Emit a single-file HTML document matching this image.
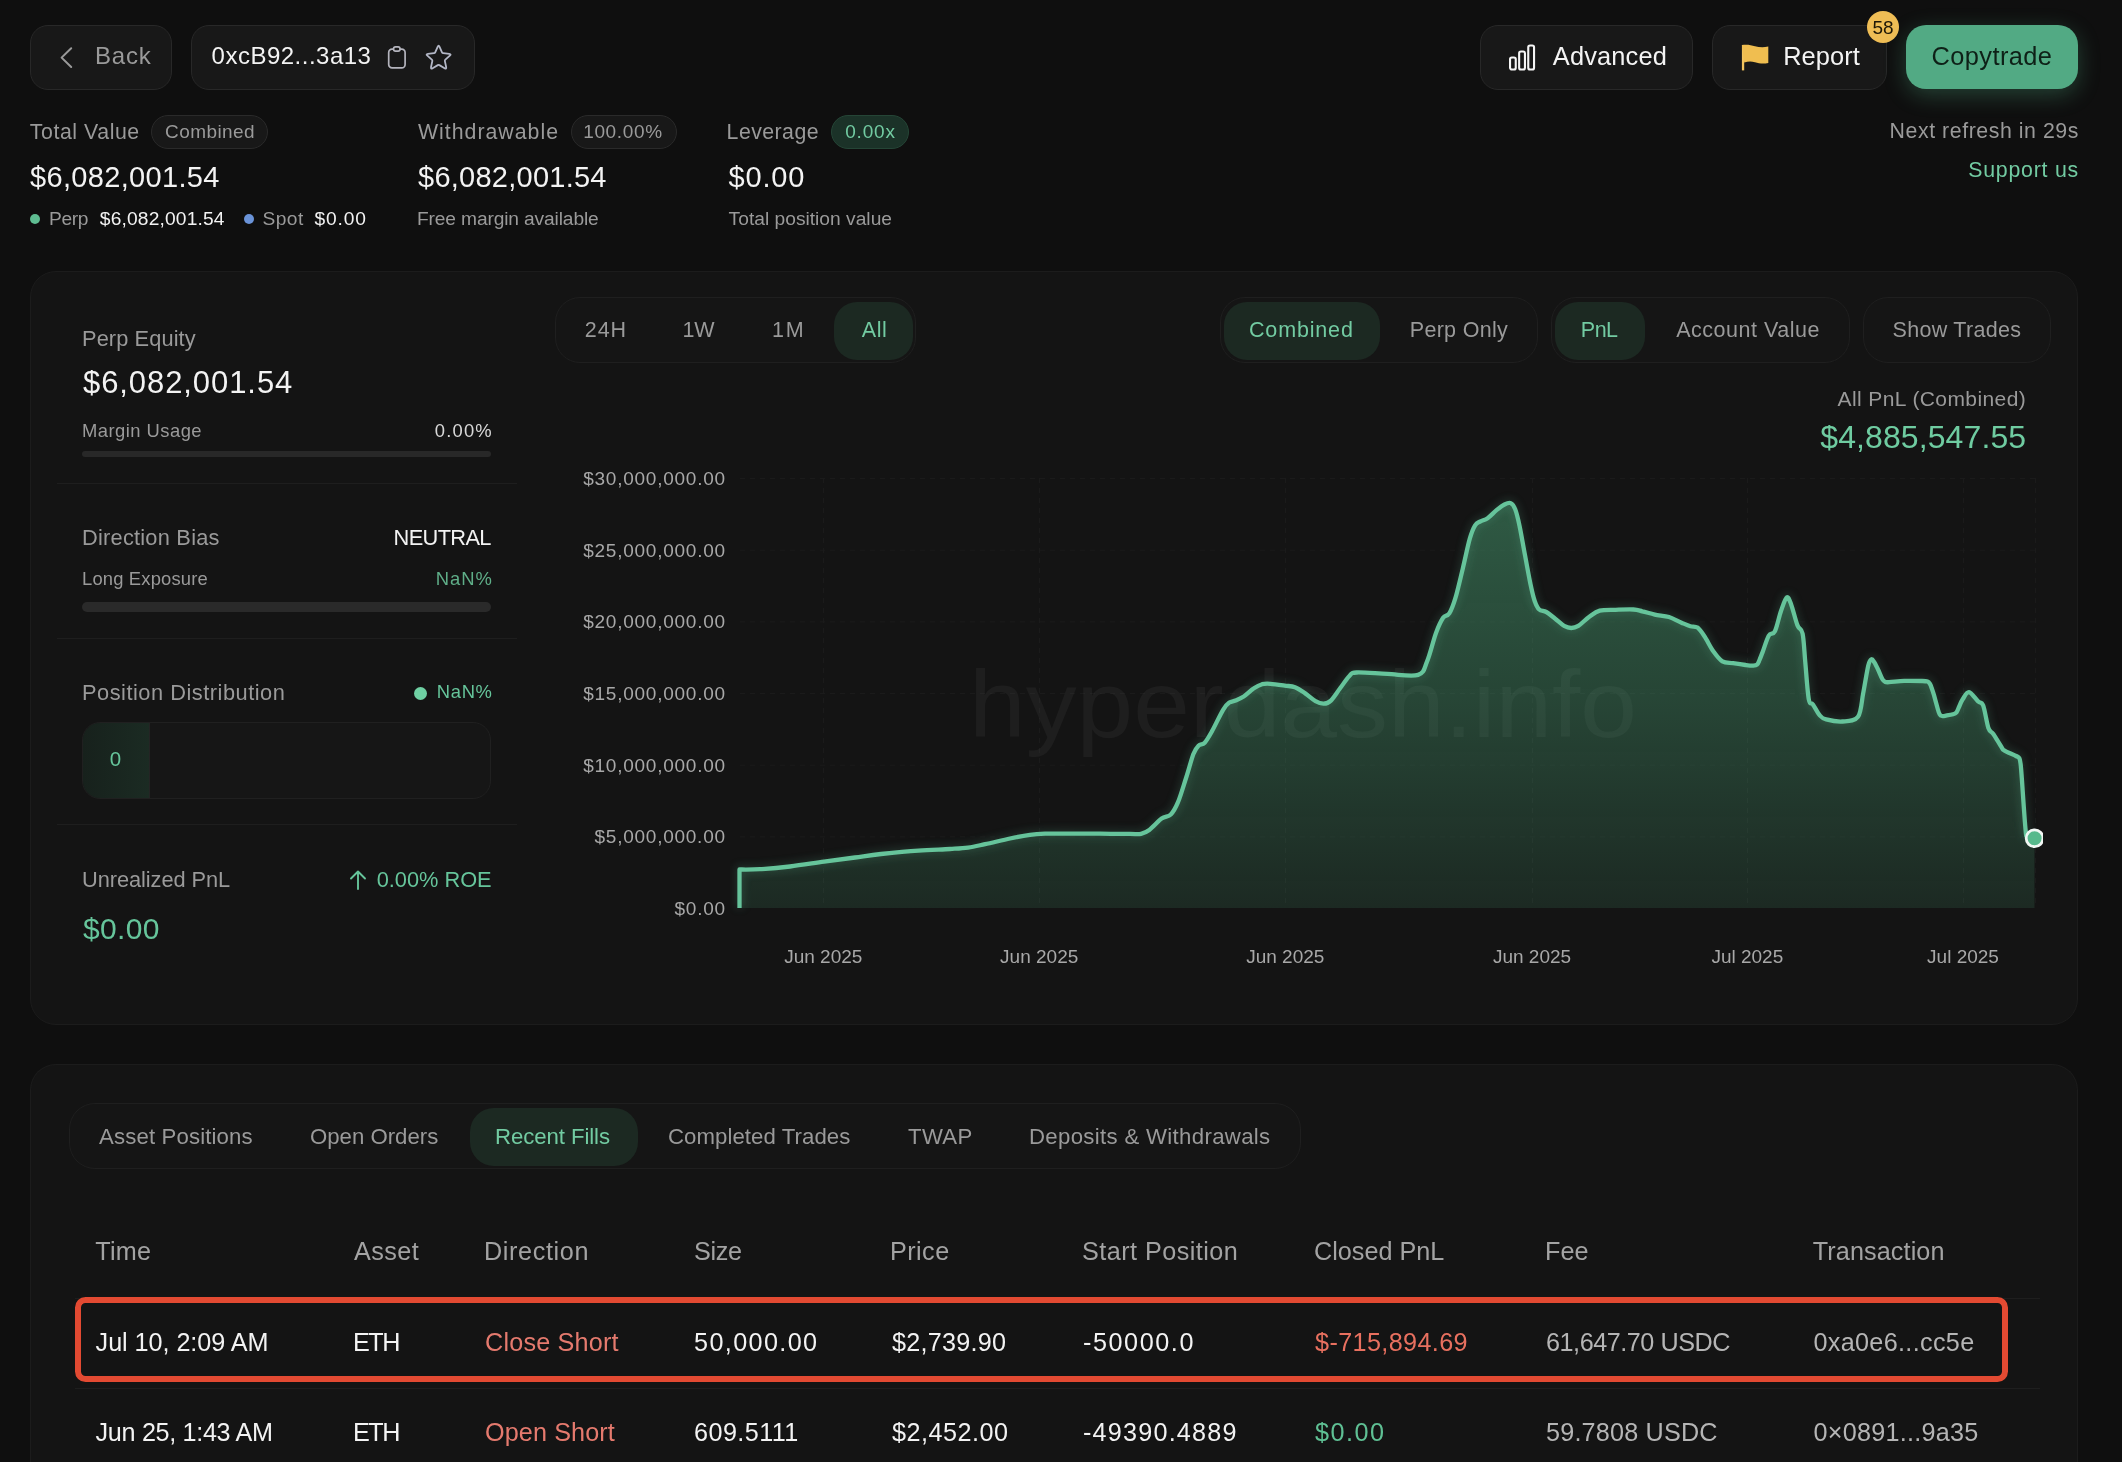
<!DOCTYPE html>
<html lang="en">
<head>
<meta charset="utf-8">
<title>Trader 0xcB92...3a13</title>
<style>
*{box-sizing:border-box;margin:0;padding:0}
html,body{width:2122px;height:1462px;overflow:hidden;background:#0f0f0f}
body{position:relative;font-family:"Liberation Sans",Arial,sans-serif;color:#f3f3f3;-webkit-font-smoothing:antialiased}
.abs{position:absolute}
.t{position:absolute;white-space:nowrap;line-height:1}
.r{text-align:right}
.mut{color:#9a9a9a}
.grn{color:#72cba2}
.btn{position:absolute;top:24.5px;height:65px;border-radius:18px;background:#181818;border:1px solid #282828}
.pill{position:absolute;height:34px;border-radius:17px;background:#181818;border:1px solid #2a2a2a}
.card{position:absolute;left:30px;width:2048px;background:#141414;border:1px solid #1c1c1c;border-radius:26px}
.grp{position:absolute;height:66px;border-radius:25px;background:#151515;border:1px solid #1f1f1f}
.act{position:absolute;height:58px;border-radius:23px;background:#1c2922}
.hr{position:absolute;height:1px;background:#1e1e1e}
.dot{position:absolute;width:10px;height:10px;border-radius:50%}
</style>
</head>
<body>
<div class="abs" style="left:0;top:0;width:2122px;height:1462px;overflow:hidden;will-change:transform">

<!-- ================= HEADER ================= -->
<header>
  <a class="btn" style="left:30px;width:142px">
    <svg class="abs" style="left:28px;top:20px" width="16" height="24" viewBox="0 0 16 24" fill="none" stroke="#9a9a9a" stroke-width="2" stroke-linecap="round" stroke-linejoin="round"><path d="M12.2 2.2 L2.6 11.6 L12.2 21"/></svg>
    <span class="t mut" id="t-back" style="left:64.0px;top:18.0px;font-size:24px;letter-spacing:0.76px">Back</span>
  </a>
  <div class="btn" style="left:191px;width:284px">
    <span class="t" id="t-addr" style="left:19.6px;top:18.0px;font-size:24px;letter-spacing:0.49px">0xcB92...3a13</span>
    <svg class="abs" style="left:194px;top:18.5px" width="22" height="28" viewBox="0 0 22 28" fill="none" stroke="#b4b4bd" stroke-width="1.7" stroke-linejoin="round"><rect x="2.7" y="5.2" width="16.4" height="18.6" rx="3.4"/><rect x="7.6" y="2.9" width="6.4" height="4.2" rx="1.9" fill="#181818"/></svg>
    <svg class="abs" style="left:232.4px;top:16.2px" width="30" height="32" viewBox="0 0 30 32" fill="none" stroke="#b3b7c6" stroke-width="1.8" stroke-linejoin="round" stroke-linecap="round"><path d="M13.63 4.80Q14.60 2.60 15.57 4.80L18.00 10.30Q18.36 11.12 19.26 11.21L25.24 11.82Q27.63 12.07 25.84 13.67L21.36 17.68Q20.69 18.28 20.88 19.16L22.15 25.04Q22.65 27.38 20.58 26.18L15.38 23.15Q14.60 22.70 13.82 23.15L8.62 26.18Q6.55 27.38 7.05 25.04L8.32 19.16Q8.51 18.28 7.84 17.68L3.36 13.67Q1.57 12.07 3.96 11.82L9.94 11.21Q10.84 11.12 11.20 10.30Z"/></svg>
  </div>

  <div class="btn" style="left:1480px;width:213px">
    <svg class="abs" style="left:27px;top:17px" width="30" height="30" viewBox="0 0 30 30" fill="none" stroke="#f5f5f5" stroke-width="2.1" stroke-linejoin="round"><rect x="2.05" y="14.55" width="5.7" height="12" rx="1.8"/><rect x="11.15" y="8.45" width="5.8" height="18.1" rx="1.8"/><rect x="20.25" y="2.45" width="5.8" height="24.1" rx="1.8"/></svg>
    <span class="t" id="t-adv" style="left:71.8px;top:18.5px;font-size:25.4px;letter-spacing:0.16px">Advanced</span>
  </div>
  <div class="btn" style="left:1712px;width:175px">
    <svg class="abs" style="left:28px;top:17px" width="32" height="30" viewBox="0 0 32 30"><path d="M2.05 2V27.4" stroke="#f3c45e" stroke-width="2.3" fill="none"/><path d="M0.9 2C6 1.3 10 2 14 3.2S22 4.9 27.3 3.6V19.9C22 21.3 18 20.3 14 19.2S7 18.3 3.2 19.6Z" fill="#f0be50"/></svg>
    <span class="t" id="t-rep" style="left:70.2px;top:18.5px;font-size:25.4px;letter-spacing:0.08px">Report</span>
  </div>
  <div class="abs" style="left:1867px;top:11px;width:32px;height:32px;border-radius:50%;background:#efbd55"></div>
  <span class="t" id="t-58" style="left:1867px;width:32px;text-align:center;top:17.5px;font-size:19px;color:#1d1606">58</span>
  <div class="abs" style="left:1906px;top:25px;width:172px;height:64px;border-radius:20px;background:#52aa84;box-shadow:0 6px 22px rgba(82,170,132,.33)"></div>
  <span class="t" id="t-copy" style="left:1931.6px;top:43.5px;font-size:25.4px;color:#0e2017;letter-spacing:0.40px">Copytrade</span>
</header>

<!-- ================= STATS ================= -->
<section>
  <span class="t mut" id="s-tv" style="left:29.8px;top:122.0px;font-size:21.3px;letter-spacing:0.56px">Total Value</span>
  <div class="pill" style="left:151px;top:115.4px;width:117px"></div>
  <span class="t mut" id="s-comb" style="left:165.0px;top:122.2px;font-size:19px;letter-spacing:0.43px">Combined</span>
  <span class="t" id="s-tvv" style="left:30.0px;top:162.5px;font-size:29px;letter-spacing:0.33px">$6,082,001.54</span>
  <i class="dot" style="left:30px;top:214px;background:#5fbd92"></i>
  <span class="t mut" id="s-perp" style="left:49.0px;top:209.2px;font-size:19.2px;letter-spacing:-0.40px">Perp</span>
  <span class="t" id="s-perpv" style="left:99.8px;top:209.2px;font-size:19.2px;letter-spacing:0.17px">$6,082,001.54</span>
  <i class="dot" style="left:244px;top:214px;background:#6a93d8"></i>
  <span class="t mut" id="s-spot" style="left:262.6px;top:209.2px;font-size:19.2px;letter-spacing:0.40px">Spot</span>
  <span class="t" id="s-spotv" style="left:314.4px;top:209.2px;font-size:19.2px;letter-spacing:0.90px">$0.00</span>

  <span class="t mut" id="s-wd" style="left:418.0px;top:122.0px;font-size:21.3px;letter-spacing:1.00px">Withdrawable</span>
  <div class="pill" style="left:571px;top:115.4px;width:106px"></div>
  <span class="t mut" id="s-100" style="left:583.2px;top:122.2px;font-size:19px;letter-spacing:0.65px">100.00%</span>
  <span class="t" id="s-wdv" style="left:418.0px;top:162.5px;font-size:29px;letter-spacing:0.25px">$6,082,001.54</span>
  <span class="t mut" id="s-free" style="left:417.0px;top:209.3px;font-size:19.2px;letter-spacing:-0.14px">Free margin available</span>

  <span class="t mut" id="s-lev" style="left:726.6px;top:122.0px;font-size:21.3px;letter-spacing:0.45px">Leverage</span>
  <div class="pill" style="left:831px;top:115.4px;width:78px;background:#1b3228;border-color:#254536"></div>
  <span class="t grn" id="s-0x" style="left:845.2px;top:122.2px;font-size:19px;letter-spacing:0.82px">0.00x</span>
  <span class="t" id="s-levv" style="left:728.6px;top:162.5px;font-size:29px;letter-spacing:0.82px">$0.00</span>
  <span class="t mut" id="s-tpv" style="left:728.6px;top:209.3px;font-size:19.2px;letter-spacing:0.01px">Total position value</span>

  <span class="t mut r" id="s-next" style="right:43.0px;top:120.7px;font-size:21.3px;letter-spacing:0.56px">Next refresh in 29s</span>
  <span class="t grn r" id="s-sup" style="right:43.0px;top:159.8px;font-size:21.3px;letter-spacing:0.78px">Support us</span>
</section>

<!-- ================= MAIN CARD ================= -->
<main class="card" style="top:271px;height:754px">
  <!-- coordinates inside the card are page coords minus (30,271) via wrapper below -->
  <div class="abs" style="left:-31px;top:-272px;width:2122px;height:1462px">

  <!-- left panel -->
  <aside>
    <span class="t mut" id="l-pe" style="left:82.0px;top:327.6px;font-size:21.8px;letter-spacing:0.10px">Perp Equity</span>
    <span class="t" id="l-pev" style="left:83.0px;top:367.2px;font-size:31px;letter-spacing:0.92px">$6,082,001.54</span>
    <span class="t mut" id="l-mu" style="left:82.0px;top:421.8px;font-size:18.4px;letter-spacing:0.46px">Margin Usage</span>
    <span class="t r" id="l-mup" style="right:1629.2px;top:421.8px;font-size:18.4px;color:#d8d8d8;letter-spacing:1.17px">0.00%</span>
    <div class="abs" style="left:82px;top:451px;width:409px;height:6px;border-radius:3px;background:#282828"></div>
    <div class="hr" style="left:57px;top:483px;width:460px"></div>

    <span class="t mut" id="l-db" style="left:82.0px;top:527.0px;font-size:21.8px;letter-spacing:0.23px">Direction Bias</span>
    <span class="t r" id="l-neu" style="right:1631.2px;top:527.0px;font-size:21.8px;letter-spacing:-0.64px">NEUTRAL</span>
    <span class="t mut" id="l-le" style="left:82.0px;top:569.5px;font-size:18.4px;letter-spacing:0.17px">Long Exposure</span>
    <span class="t r" id="l-nan1" style="right:1629.2px;top:569.5px;font-size:18.4px;color:#5fae88;letter-spacing:1.00px">NaN%</span>
    <div class="abs" style="left:82px;top:602px;width:409px;height:10px;border-radius:5px;background:#2a2a2a"></div>
    <div class="hr" style="left:57px;top:638px;width:460px"></div>

    <span class="t mut" id="l-pd" style="left:82.0px;top:681.6px;font-size:21.8px;letter-spacing:0.51px">Position Distribution</span>
    <i class="dot" style="left:414px;top:686.5px;width:13px;height:13px;background:#6fd0a3"></i>
    <span class="t r" id="l-nan2" style="right:1629.4px;top:683.0px;font-size:18.4px;color:#66c59b;letter-spacing:0.66px">NaN%</span>
    <div class="abs" style="left:82px;top:722px;width:409px;height:77px;border-radius:18px;background:#161616;border:1px solid #202020;overflow:hidden">
      <div class="abs" style="left:0;top:0;width:67px;height:77px;background:linear-gradient(90deg,#17211c,#1b2b23);border-right:1px solid #242424"></div>
    </div>
    <span class="t" id="l-zero" style="left:82px;width:67px;text-align:center;top:749.0px;font-size:20.5px;color:#66c59b">0</span>
    <div class="hr" style="left:57px;top:824px;width:460px"></div>

    <span class="t mut" id="l-up" style="left:82.0px;top:869.0px;font-size:21.8px;letter-spacing:-0.07px">Unrealized PnL</span>
    <svg class="abs" style="left:348px;top:868.5px" width="20" height="22" viewBox="0 0 20 22" fill="none" stroke="#66c59b" stroke-width="1.9" stroke-linecap="round" stroke-linejoin="round"><path d="M10 20V2.5M3 9.5L10 2.5L17 9.5"/></svg>
    <span class="t r" id="l-roe" style="right:1630.4px;top:869.0px;font-size:21.8px;color:#66c59b;letter-spacing:-0.02px">0.00% ROE</span>
    <span class="t" id="l-upv" style="left:83.0px;top:913.6px;font-size:30px;color:#66c59b;letter-spacing:0.35px">$0.00</span>
  </aside>

  <!-- toolbar -->
  <nav>
    <div class="grp" style="left:555px;top:297px;width:361px"></div>
    <div class="act" style="left:834px;top:302px;width:79px"></div>
    <span class="t mut" id="c-24h" style="left:584.8px;top:320.4px;font-size:21.5px;letter-spacing:0.90px">24H</span>
    <span class="t mut" id="c-1w" style="left:682.4px;top:320.4px;font-size:21.5px;letter-spacing:-0.20px">1W</span>
    <span class="t mut" id="c-1m" style="left:772.0px;top:320.4px;font-size:21.5px;letter-spacing:1.80px">1M</span>
    <span class="t grn" id="c-all" style="left:861.8px;top:320.4px;font-size:21.5px;letter-spacing:0.50px">All</span>

    <div class="grp" style="left:1220px;top:297px;width:318px"></div>
    <div class="act" style="left:1223.5px;top:302px;width:156.5px"></div>
    <span class="t grn" id="c-comb" style="left:1249.0px;top:320.4px;font-size:21.5px;letter-spacing:0.84px">Combined</span>
    <span class="t mut" id="c-perp" style="left:1409.8px;top:320.4px;font-size:21.5px;letter-spacing:0.29px">Perp Only</span>

    <div class="grp" style="left:1551px;top:297px;width:299px"></div>
    <div class="act" style="left:1555px;top:302px;width:89.5px"></div>
    <span class="t grn" id="c-pnl" style="left:1580.8px;top:320.4px;font-size:21.5px;letter-spacing:-0.50px">PnL</span>
    <span class="t mut" id="c-av" style="left:1676.2px;top:320.4px;font-size:21.5px;letter-spacing:0.51px">Account Value</span>

    <div class="grp" style="left:1863px;top:297px;width:188px"></div>
    <span class="t mut" id="c-st" style="left:1892.6px;top:320.4px;font-size:21.5px;letter-spacing:0.28px">Show Trades</span>
  </nav>

  <span class="t mut r" id="c-apl" style="right:95.8px;top:388.1px;font-size:21px;letter-spacing:0.41px">All PnL (Combined)</span>
  <span class="t r" id="c-aplv" style="right:95.8px;top:420.6px;font-size:32px;color:#6fcca1;letter-spacing:0.10px">$4,885,547.55</span>

  <!-- chart -->
  <svg class="abs" style="left:0;top:0" width="2122" height="1040" viewBox="0 0 2122 1040" font-family="Liberation Sans, Arial, sans-serif">
    <defs>
      <linearGradient id="ag" x1="0" y1="503" x2="0" y2="908" gradientUnits="userSpaceOnUse">
        <stop offset="0" stop-color="#55bd88" stop-opacity=".41"/>
        <stop offset=".5" stop-color="#55bd88" stop-opacity=".29"/>
        <stop offset="1" stop-color="#55bd88" stop-opacity=".13"/>
      </linearGradient>
      <filter id="glow" x="-5%" y="-10%" width="110%" height="120%"><feGaussianBlur stdDeviation="4"/></filter>
      <clipPath id="cp"><rect x="730" y="470" width="1313" height="446"/></clipPath>
    </defs>
    <g stroke="#1b1b1b" stroke-width="1" stroke-dasharray="5 5" fill="none">
      <path d="M740 478.5H2035M740 550.2H2035M740 621.8H2035M740 693.5H2035M740 765.2H2035M740 836.8H2035"/>
      <path d="M823.5 478V908M1039.5 478V908M1285.5 478V908M1532.5 478V908M1747.5 478V908M1963.5 478V908M2035.5 478V908"/>
    </g>
    <text id="wm" x="969" y="737" font-size="95" fill="#ffffff" fill-opacity=".042" textLength="668" lengthAdjust="spacingAndGlyphs">hyperdash.info</text>
    <g clip-path="url(#cp)">
      <path fill="url(#ag)" d="M739.5 908V869.5C742.9 869.5 751.6 869.7 760.0 869.2C768.4 868.7 779.3 867.8 790.0 866.5C800.7 865.2 813.2 863.2 824.0 861.7C834.8 860.2 845.5 858.8 855.0 857.5C864.5 856.2 870.4 855.1 881.0 854.0C891.6 852.9 907.0 851.4 918.5 850.6C930.0 849.8 941.8 849.5 950.0 849.0C958.2 848.5 962.2 848.4 968.0 847.6C973.8 846.8 978.0 845.7 985.0 844.2C992.0 842.7 1002.5 840.1 1010.0 838.5C1017.5 836.9 1024.2 835.6 1030.0 834.8C1035.8 834.0 1038.3 833.9 1045.0 833.7C1051.7 833.5 1060.8 833.6 1070.0 833.6C1079.2 833.6 1090.0 833.7 1100.0 833.7C1110.0 833.8 1123.2 833.9 1130.0 833.9C1136.8 833.9 1137.8 834.5 1141.0 833.8C1144.2 833.1 1145.9 832.4 1149.3 829.9C1152.7 827.4 1158.0 821.2 1161.6 818.6C1165.2 816.0 1168.1 817.2 1170.8 814.5C1173.5 811.8 1175.4 808.4 1178.0 802.2C1180.6 796.0 1183.6 785.5 1186.2 777.5C1188.8 769.5 1191.4 759.3 1193.4 754.0C1195.5 748.7 1196.6 747.6 1198.5 745.7C1200.4 743.8 1202.5 745.1 1204.7 742.7C1206.9 740.3 1208.8 736.9 1211.9 731.4C1215.0 725.9 1220.2 714.6 1223.1 709.8C1226.0 705.0 1227.2 704.1 1229.3 702.6C1231.4 701.1 1233.1 701.6 1235.5 700.6C1237.9 699.6 1240.6 698.5 1243.7 696.5C1246.8 694.5 1250.8 690.3 1253.9 688.3C1257.0 686.2 1259.4 685.0 1262.1 684.2C1264.8 683.5 1266.5 683.6 1270.3 683.8C1274.1 684.0 1280.6 685.0 1284.7 685.6C1288.8 686.2 1291.6 685.9 1295.0 687.2C1298.4 688.5 1301.8 691.1 1305.2 693.4C1308.6 695.7 1312.4 699.5 1315.5 701.2C1318.6 702.9 1321.1 703.8 1323.7 703.7C1326.3 703.6 1328.2 703.2 1330.9 700.6C1333.6 698.0 1337.0 692.4 1340.1 688.3C1343.2 684.2 1346.7 678.6 1349.4 676.0C1352.1 673.4 1350.2 672.9 1356.5 672.5C1362.8 672.1 1377.0 673.5 1387.3 673.9C1397.6 674.3 1411.5 677.0 1418.1 674.9C1424.7 672.8 1424.1 668.4 1427.1 661.4C1430.1 654.4 1433.3 640.3 1436.0 633.0C1438.7 625.7 1440.9 621.1 1443.1 617.8C1445.3 614.5 1447.2 616.8 1449.3 613.4C1451.4 610.0 1453.4 604.8 1455.6 597.4C1457.8 590.0 1460.3 578.7 1462.7 568.9C1465.1 559.1 1467.7 546.0 1469.8 538.7C1471.9 531.5 1473.3 528.3 1475.1 525.4C1476.9 522.5 1478.4 522.5 1480.5 521.3C1482.6 520.1 1484.9 520.1 1487.6 518.2C1490.3 516.4 1493.7 512.5 1496.5 510.2C1499.3 507.9 1502.1 505.7 1504.5 504.5C1506.9 503.3 1508.9 502.3 1510.7 503.1C1512.5 503.9 1513.7 505.4 1515.2 509.3C1516.7 513.1 1518.0 518.6 1519.6 526.2C1521.2 533.8 1523.1 545.2 1524.9 554.7C1526.7 564.2 1528.7 575.5 1530.3 583.2C1531.9 590.9 1533.2 596.6 1534.7 601.0C1536.2 605.4 1537.3 607.7 1539.2 609.5C1541.1 611.3 1543.6 610.5 1546.3 612.0C1549.0 613.5 1552.2 616.4 1555.2 618.7C1558.2 621.0 1561.4 624.4 1564.1 625.9C1566.8 627.4 1568.8 628.0 1571.2 628.0C1573.6 628.0 1575.3 627.7 1578.3 625.9C1581.3 624.1 1585.4 619.5 1589.0 617.0C1592.6 614.5 1595.2 611.9 1599.7 610.7C1604.2 609.5 1610.1 610.0 1615.7 609.8C1621.3 609.6 1629.0 609.2 1633.4 609.5C1637.8 609.8 1638.7 610.4 1642.3 611.3C1645.9 612.1 1650.3 613.6 1654.8 614.6C1659.2 615.6 1664.5 615.6 1669.0 617.0C1673.5 618.4 1677.9 621.2 1681.5 622.7C1685.1 624.2 1687.7 625.4 1690.4 626.2C1693.1 627.0 1695.1 625.9 1697.5 627.6C1699.9 629.3 1701.9 632.5 1704.6 636.5C1707.3 640.5 1710.5 647.5 1713.5 651.6C1716.5 655.8 1719.2 659.5 1722.4 661.4C1725.7 663.3 1729.2 662.6 1733.0 663.2C1736.8 663.8 1742.2 664.6 1745.5 665.0C1748.8 665.4 1751.1 665.7 1753.0 665.6C1754.9 665.5 1756.0 665.5 1757.0 664.6C1758.0 663.8 1758.4 662.6 1759.3 660.5C1760.2 658.4 1761.0 656.2 1762.6 652.1C1764.2 648.0 1766.7 639.2 1768.7 635.7C1770.8 632.2 1772.9 635.3 1774.9 631.2C1777.0 627.1 1779.0 616.6 1781.0 611.0C1783.0 605.4 1785.1 598.3 1786.8 597.3C1788.5 596.3 1789.5 600.2 1791.3 604.9C1793.1 609.6 1795.6 620.6 1797.5 625.4C1799.4 630.2 1801.3 627.4 1802.6 633.6C1803.9 639.8 1804.3 651.5 1805.3 662.4C1806.3 673.3 1807.5 692.3 1808.8 699.3C1810.1 706.3 1811.0 701.7 1812.9 704.4C1814.8 707.1 1817.8 713.2 1820.0 715.7C1822.2 718.2 1822.4 718.4 1826.2 719.4C1830.0 720.4 1837.3 721.9 1842.6 721.5C1847.9 721.1 1854.6 721.5 1858.0 716.8C1861.4 712.1 1861.5 701.8 1863.2 693.2C1864.9 684.6 1866.9 671.0 1868.3 665.4C1869.7 659.8 1870.4 659.8 1871.4 659.3C1872.4 658.8 1873.2 660.5 1874.4 662.4C1875.6 664.3 1877.2 667.7 1878.5 670.5C1879.8 673.3 1881.2 677.1 1882.3 679.0C1883.4 680.9 1883.9 681.3 1885.0 681.8C1886.1 682.3 1885.8 682.4 1889.0 682.2C1892.2 682.1 1898.7 681.1 1904.2 680.9C1909.7 680.7 1918.1 680.9 1922.0 681.0C1925.9 681.1 1926.2 681.1 1927.5 681.6C1928.8 682.1 1929.2 682.8 1930.0 684.0C1930.8 685.2 1931.3 687.1 1932.0 689.0C1932.7 690.9 1933.1 692.0 1934.0 695.2C1934.9 698.4 1936.6 704.8 1937.5 708.0C1938.4 711.2 1938.8 712.9 1939.6 714.2C1940.3 715.5 1940.9 715.8 1942.0 716.0C1943.1 716.2 1944.2 715.9 1946.0 715.6C1947.8 715.3 1951.2 714.8 1953.0 714.2C1954.8 713.7 1955.5 713.5 1956.5 712.3C1957.5 711.1 1958.0 709.2 1959.0 707.0C1960.0 704.8 1961.0 701.8 1962.7 699.3C1964.4 696.8 1966.3 691.8 1968.9 692.1C1971.5 692.5 1975.7 699.2 1978.1 701.4C1980.5 703.6 1981.5 701.1 1983.2 705.5C1984.9 709.9 1986.7 723.2 1988.4 728.0C1990.1 732.8 1991.3 731.0 1993.5 734.2C1995.7 737.5 1999.9 744.8 2001.7 747.5C2003.5 750.2 2002.1 749.2 2004.5 750.6C2006.9 752.0 2013.5 754.7 2016.0 756.0C2018.5 757.3 2018.5 756.9 2019.3 758.2C2020.1 759.5 2020.2 760.7 2020.6 764.0C2021.0 767.3 2021.0 767.0 2021.8 778.0C2022.6 789.0 2024.6 820.3 2025.6 830.0C2026.5 839.7 2026.0 834.6 2027.5 836.0C2029.0 837.4 2033.3 837.8 2034.5 838.2V908H739.5Z"/>
      <path fill="none" stroke="#5fc096" stroke-opacity=".2" stroke-width="7" filter="url(#glow)" d="M739.5 908V869.5C742.9 869.5 751.6 869.7 760.0 869.2C768.4 868.7 779.3 867.8 790.0 866.5C800.7 865.2 813.2 863.2 824.0 861.7C834.8 860.2 845.5 858.8 855.0 857.5C864.5 856.2 870.4 855.1 881.0 854.0C891.6 852.9 907.0 851.4 918.5 850.6C930.0 849.8 941.8 849.5 950.0 849.0C958.2 848.5 962.2 848.4 968.0 847.6C973.8 846.8 978.0 845.7 985.0 844.2C992.0 842.7 1002.5 840.1 1010.0 838.5C1017.5 836.9 1024.2 835.6 1030.0 834.8C1035.8 834.0 1038.3 833.9 1045.0 833.7C1051.7 833.5 1060.8 833.6 1070.0 833.6C1079.2 833.6 1090.0 833.7 1100.0 833.7C1110.0 833.8 1123.2 833.9 1130.0 833.9C1136.8 833.9 1137.8 834.5 1141.0 833.8C1144.2 833.1 1145.9 832.4 1149.3 829.9C1152.7 827.4 1158.0 821.2 1161.6 818.6C1165.2 816.0 1168.1 817.2 1170.8 814.5C1173.5 811.8 1175.4 808.4 1178.0 802.2C1180.6 796.0 1183.6 785.5 1186.2 777.5C1188.8 769.5 1191.4 759.3 1193.4 754.0C1195.5 748.7 1196.6 747.6 1198.5 745.7C1200.4 743.8 1202.5 745.1 1204.7 742.7C1206.9 740.3 1208.8 736.9 1211.9 731.4C1215.0 725.9 1220.2 714.6 1223.1 709.8C1226.0 705.0 1227.2 704.1 1229.3 702.6C1231.4 701.1 1233.1 701.6 1235.5 700.6C1237.9 699.6 1240.6 698.5 1243.7 696.5C1246.8 694.5 1250.8 690.3 1253.9 688.3C1257.0 686.2 1259.4 685.0 1262.1 684.2C1264.8 683.5 1266.5 683.6 1270.3 683.8C1274.1 684.0 1280.6 685.0 1284.7 685.6C1288.8 686.2 1291.6 685.9 1295.0 687.2C1298.4 688.5 1301.8 691.1 1305.2 693.4C1308.6 695.7 1312.4 699.5 1315.5 701.2C1318.6 702.9 1321.1 703.8 1323.7 703.7C1326.3 703.6 1328.2 703.2 1330.9 700.6C1333.6 698.0 1337.0 692.4 1340.1 688.3C1343.2 684.2 1346.7 678.6 1349.4 676.0C1352.1 673.4 1350.2 672.9 1356.5 672.5C1362.8 672.1 1377.0 673.5 1387.3 673.9C1397.6 674.3 1411.5 677.0 1418.1 674.9C1424.7 672.8 1424.1 668.4 1427.1 661.4C1430.1 654.4 1433.3 640.3 1436.0 633.0C1438.7 625.7 1440.9 621.1 1443.1 617.8C1445.3 614.5 1447.2 616.8 1449.3 613.4C1451.4 610.0 1453.4 604.8 1455.6 597.4C1457.8 590.0 1460.3 578.7 1462.7 568.9C1465.1 559.1 1467.7 546.0 1469.8 538.7C1471.9 531.5 1473.3 528.3 1475.1 525.4C1476.9 522.5 1478.4 522.5 1480.5 521.3C1482.6 520.1 1484.9 520.1 1487.6 518.2C1490.3 516.4 1493.7 512.5 1496.5 510.2C1499.3 507.9 1502.1 505.7 1504.5 504.5C1506.9 503.3 1508.9 502.3 1510.7 503.1C1512.5 503.9 1513.7 505.4 1515.2 509.3C1516.7 513.1 1518.0 518.6 1519.6 526.2C1521.2 533.8 1523.1 545.2 1524.9 554.7C1526.7 564.2 1528.7 575.5 1530.3 583.2C1531.9 590.9 1533.2 596.6 1534.7 601.0C1536.2 605.4 1537.3 607.7 1539.2 609.5C1541.1 611.3 1543.6 610.5 1546.3 612.0C1549.0 613.5 1552.2 616.4 1555.2 618.7C1558.2 621.0 1561.4 624.4 1564.1 625.9C1566.8 627.4 1568.8 628.0 1571.2 628.0C1573.6 628.0 1575.3 627.7 1578.3 625.9C1581.3 624.1 1585.4 619.5 1589.0 617.0C1592.6 614.5 1595.2 611.9 1599.7 610.7C1604.2 609.5 1610.1 610.0 1615.7 609.8C1621.3 609.6 1629.0 609.2 1633.4 609.5C1637.8 609.8 1638.7 610.4 1642.3 611.3C1645.9 612.1 1650.3 613.6 1654.8 614.6C1659.2 615.6 1664.5 615.6 1669.0 617.0C1673.5 618.4 1677.9 621.2 1681.5 622.7C1685.1 624.2 1687.7 625.4 1690.4 626.2C1693.1 627.0 1695.1 625.9 1697.5 627.6C1699.9 629.3 1701.9 632.5 1704.6 636.5C1707.3 640.5 1710.5 647.5 1713.5 651.6C1716.5 655.8 1719.2 659.5 1722.4 661.4C1725.7 663.3 1729.2 662.6 1733.0 663.2C1736.8 663.8 1742.2 664.6 1745.5 665.0C1748.8 665.4 1751.1 665.7 1753.0 665.6C1754.9 665.5 1756.0 665.5 1757.0 664.6C1758.0 663.8 1758.4 662.6 1759.3 660.5C1760.2 658.4 1761.0 656.2 1762.6 652.1C1764.2 648.0 1766.7 639.2 1768.7 635.7C1770.8 632.2 1772.9 635.3 1774.9 631.2C1777.0 627.1 1779.0 616.6 1781.0 611.0C1783.0 605.4 1785.1 598.3 1786.8 597.3C1788.5 596.3 1789.5 600.2 1791.3 604.9C1793.1 609.6 1795.6 620.6 1797.5 625.4C1799.4 630.2 1801.3 627.4 1802.6 633.6C1803.9 639.8 1804.3 651.5 1805.3 662.4C1806.3 673.3 1807.5 692.3 1808.8 699.3C1810.1 706.3 1811.0 701.7 1812.9 704.4C1814.8 707.1 1817.8 713.2 1820.0 715.7C1822.2 718.2 1822.4 718.4 1826.2 719.4C1830.0 720.4 1837.3 721.9 1842.6 721.5C1847.9 721.1 1854.6 721.5 1858.0 716.8C1861.4 712.1 1861.5 701.8 1863.2 693.2C1864.9 684.6 1866.9 671.0 1868.3 665.4C1869.7 659.8 1870.4 659.8 1871.4 659.3C1872.4 658.8 1873.2 660.5 1874.4 662.4C1875.6 664.3 1877.2 667.7 1878.5 670.5C1879.8 673.3 1881.2 677.1 1882.3 679.0C1883.4 680.9 1883.9 681.3 1885.0 681.8C1886.1 682.3 1885.8 682.4 1889.0 682.2C1892.2 682.1 1898.7 681.1 1904.2 680.9C1909.7 680.7 1918.1 680.9 1922.0 681.0C1925.9 681.1 1926.2 681.1 1927.5 681.6C1928.8 682.1 1929.2 682.8 1930.0 684.0C1930.8 685.2 1931.3 687.1 1932.0 689.0C1932.7 690.9 1933.1 692.0 1934.0 695.2C1934.9 698.4 1936.6 704.8 1937.5 708.0C1938.4 711.2 1938.8 712.9 1939.6 714.2C1940.3 715.5 1940.9 715.8 1942.0 716.0C1943.1 716.2 1944.2 715.9 1946.0 715.6C1947.8 715.3 1951.2 714.8 1953.0 714.2C1954.8 713.7 1955.5 713.5 1956.5 712.3C1957.5 711.1 1958.0 709.2 1959.0 707.0C1960.0 704.8 1961.0 701.8 1962.7 699.3C1964.4 696.8 1966.3 691.8 1968.9 692.1C1971.5 692.5 1975.7 699.2 1978.1 701.4C1980.5 703.6 1981.5 701.1 1983.2 705.5C1984.9 709.9 1986.7 723.2 1988.4 728.0C1990.1 732.8 1991.3 731.0 1993.5 734.2C1995.7 737.5 1999.9 744.8 2001.7 747.5C2003.5 750.2 2002.1 749.2 2004.5 750.6C2006.9 752.0 2013.5 754.7 2016.0 756.0C2018.5 757.3 2018.5 756.9 2019.3 758.2C2020.1 759.5 2020.2 760.7 2020.6 764.0C2021.0 767.3 2021.0 767.0 2021.8 778.0C2022.6 789.0 2024.6 820.3 2025.6 830.0C2026.5 839.7 2026.0 834.6 2027.5 836.0C2029.0 837.4 2033.3 837.8 2034.5 838.2"/>
      <path fill="none" stroke="#66c49b" stroke-width="4.3" stroke-linejoin="round" stroke-linecap="butt" d="M739.5 908V869.5C742.9 869.5 751.6 869.7 760.0 869.2C768.4 868.7 779.3 867.8 790.0 866.5C800.7 865.2 813.2 863.2 824.0 861.7C834.8 860.2 845.5 858.8 855.0 857.5C864.5 856.2 870.4 855.1 881.0 854.0C891.6 852.9 907.0 851.4 918.5 850.6C930.0 849.8 941.8 849.5 950.0 849.0C958.2 848.5 962.2 848.4 968.0 847.6C973.8 846.8 978.0 845.7 985.0 844.2C992.0 842.7 1002.5 840.1 1010.0 838.5C1017.5 836.9 1024.2 835.6 1030.0 834.8C1035.8 834.0 1038.3 833.9 1045.0 833.7C1051.7 833.5 1060.8 833.6 1070.0 833.6C1079.2 833.6 1090.0 833.7 1100.0 833.7C1110.0 833.8 1123.2 833.9 1130.0 833.9C1136.8 833.9 1137.8 834.5 1141.0 833.8C1144.2 833.1 1145.9 832.4 1149.3 829.9C1152.7 827.4 1158.0 821.2 1161.6 818.6C1165.2 816.0 1168.1 817.2 1170.8 814.5C1173.5 811.8 1175.4 808.4 1178.0 802.2C1180.6 796.0 1183.6 785.5 1186.2 777.5C1188.8 769.5 1191.4 759.3 1193.4 754.0C1195.5 748.7 1196.6 747.6 1198.5 745.7C1200.4 743.8 1202.5 745.1 1204.7 742.7C1206.9 740.3 1208.8 736.9 1211.9 731.4C1215.0 725.9 1220.2 714.6 1223.1 709.8C1226.0 705.0 1227.2 704.1 1229.3 702.6C1231.4 701.1 1233.1 701.6 1235.5 700.6C1237.9 699.6 1240.6 698.5 1243.7 696.5C1246.8 694.5 1250.8 690.3 1253.9 688.3C1257.0 686.2 1259.4 685.0 1262.1 684.2C1264.8 683.5 1266.5 683.6 1270.3 683.8C1274.1 684.0 1280.6 685.0 1284.7 685.6C1288.8 686.2 1291.6 685.9 1295.0 687.2C1298.4 688.5 1301.8 691.1 1305.2 693.4C1308.6 695.7 1312.4 699.5 1315.5 701.2C1318.6 702.9 1321.1 703.8 1323.7 703.7C1326.3 703.6 1328.2 703.2 1330.9 700.6C1333.6 698.0 1337.0 692.4 1340.1 688.3C1343.2 684.2 1346.7 678.6 1349.4 676.0C1352.1 673.4 1350.2 672.9 1356.5 672.5C1362.8 672.1 1377.0 673.5 1387.3 673.9C1397.6 674.3 1411.5 677.0 1418.1 674.9C1424.7 672.8 1424.1 668.4 1427.1 661.4C1430.1 654.4 1433.3 640.3 1436.0 633.0C1438.7 625.7 1440.9 621.1 1443.1 617.8C1445.3 614.5 1447.2 616.8 1449.3 613.4C1451.4 610.0 1453.4 604.8 1455.6 597.4C1457.8 590.0 1460.3 578.7 1462.7 568.9C1465.1 559.1 1467.7 546.0 1469.8 538.7C1471.9 531.5 1473.3 528.3 1475.1 525.4C1476.9 522.5 1478.4 522.5 1480.5 521.3C1482.6 520.1 1484.9 520.1 1487.6 518.2C1490.3 516.4 1493.7 512.5 1496.5 510.2C1499.3 507.9 1502.1 505.7 1504.5 504.5C1506.9 503.3 1508.9 502.3 1510.7 503.1C1512.5 503.9 1513.7 505.4 1515.2 509.3C1516.7 513.1 1518.0 518.6 1519.6 526.2C1521.2 533.8 1523.1 545.2 1524.9 554.7C1526.7 564.2 1528.7 575.5 1530.3 583.2C1531.9 590.9 1533.2 596.6 1534.7 601.0C1536.2 605.4 1537.3 607.7 1539.2 609.5C1541.1 611.3 1543.6 610.5 1546.3 612.0C1549.0 613.5 1552.2 616.4 1555.2 618.7C1558.2 621.0 1561.4 624.4 1564.1 625.9C1566.8 627.4 1568.8 628.0 1571.2 628.0C1573.6 628.0 1575.3 627.7 1578.3 625.9C1581.3 624.1 1585.4 619.5 1589.0 617.0C1592.6 614.5 1595.2 611.9 1599.7 610.7C1604.2 609.5 1610.1 610.0 1615.7 609.8C1621.3 609.6 1629.0 609.2 1633.4 609.5C1637.8 609.8 1638.7 610.4 1642.3 611.3C1645.9 612.1 1650.3 613.6 1654.8 614.6C1659.2 615.6 1664.5 615.6 1669.0 617.0C1673.5 618.4 1677.9 621.2 1681.5 622.7C1685.1 624.2 1687.7 625.4 1690.4 626.2C1693.1 627.0 1695.1 625.9 1697.5 627.6C1699.9 629.3 1701.9 632.5 1704.6 636.5C1707.3 640.5 1710.5 647.5 1713.5 651.6C1716.5 655.8 1719.2 659.5 1722.4 661.4C1725.7 663.3 1729.2 662.6 1733.0 663.2C1736.8 663.8 1742.2 664.6 1745.5 665.0C1748.8 665.4 1751.1 665.7 1753.0 665.6C1754.9 665.5 1756.0 665.5 1757.0 664.6C1758.0 663.8 1758.4 662.6 1759.3 660.5C1760.2 658.4 1761.0 656.2 1762.6 652.1C1764.2 648.0 1766.7 639.2 1768.7 635.7C1770.8 632.2 1772.9 635.3 1774.9 631.2C1777.0 627.1 1779.0 616.6 1781.0 611.0C1783.0 605.4 1785.1 598.3 1786.8 597.3C1788.5 596.3 1789.5 600.2 1791.3 604.9C1793.1 609.6 1795.6 620.6 1797.5 625.4C1799.4 630.2 1801.3 627.4 1802.6 633.6C1803.9 639.8 1804.3 651.5 1805.3 662.4C1806.3 673.3 1807.5 692.3 1808.8 699.3C1810.1 706.3 1811.0 701.7 1812.9 704.4C1814.8 707.1 1817.8 713.2 1820.0 715.7C1822.2 718.2 1822.4 718.4 1826.2 719.4C1830.0 720.4 1837.3 721.9 1842.6 721.5C1847.9 721.1 1854.6 721.5 1858.0 716.8C1861.4 712.1 1861.5 701.8 1863.2 693.2C1864.9 684.6 1866.9 671.0 1868.3 665.4C1869.7 659.8 1870.4 659.8 1871.4 659.3C1872.4 658.8 1873.2 660.5 1874.4 662.4C1875.6 664.3 1877.2 667.7 1878.5 670.5C1879.8 673.3 1881.2 677.1 1882.3 679.0C1883.4 680.9 1883.9 681.3 1885.0 681.8C1886.1 682.3 1885.8 682.4 1889.0 682.2C1892.2 682.1 1898.7 681.1 1904.2 680.9C1909.7 680.7 1918.1 680.9 1922.0 681.0C1925.9 681.1 1926.2 681.1 1927.5 681.6C1928.8 682.1 1929.2 682.8 1930.0 684.0C1930.8 685.2 1931.3 687.1 1932.0 689.0C1932.7 690.9 1933.1 692.0 1934.0 695.2C1934.9 698.4 1936.6 704.8 1937.5 708.0C1938.4 711.2 1938.8 712.9 1939.6 714.2C1940.3 715.5 1940.9 715.8 1942.0 716.0C1943.1 716.2 1944.2 715.9 1946.0 715.6C1947.8 715.3 1951.2 714.8 1953.0 714.2C1954.8 713.7 1955.5 713.5 1956.5 712.3C1957.5 711.1 1958.0 709.2 1959.0 707.0C1960.0 704.8 1961.0 701.8 1962.7 699.3C1964.4 696.8 1966.3 691.8 1968.9 692.1C1971.5 692.5 1975.7 699.2 1978.1 701.4C1980.5 703.6 1981.5 701.1 1983.2 705.5C1984.9 709.9 1986.7 723.2 1988.4 728.0C1990.1 732.8 1991.3 731.0 1993.5 734.2C1995.7 737.5 1999.9 744.8 2001.7 747.5C2003.5 750.2 2002.1 749.2 2004.5 750.6C2006.9 752.0 2013.5 754.7 2016.0 756.0C2018.5 757.3 2018.5 756.9 2019.3 758.2C2020.1 759.5 2020.2 760.7 2020.6 764.0C2021.0 767.3 2021.0 767.0 2021.8 778.0C2022.6 789.0 2024.6 820.3 2025.6 830.0C2026.5 839.7 2026.0 834.6 2027.5 836.0C2029.0 837.4 2033.3 837.8 2034.5 838.2"/>
      <circle cx="2034.6" cy="838.2" r="8.4" fill="#57b98c" stroke="#f2f7f4" stroke-width="2.8"/>
    </g>
    <g font-size="19" fill="#a8a8a8" text-anchor="end" letter-spacing=".75">
      <text id="y30" x="725.8" y="484.9">$30,000,000.00</text>
      <text id="y25" x="725.8" y="556.6">$25,000,000.00</text>
      <text id="y20" x="725.8" y="628.2">$20,000,000.00</text>
      <text id="y15" x="725.8" y="699.9">$15,000,000.00</text>
      <text id="y10" x="725.8" y="771.6">$10,000,000.00</text>
      <text id="y5" x="725.8" y="843.2">$5,000,000.00</text>
      <text id="y0" x="725.8" y="914.9">$0.00</text>
    </g>
    <g font-size="19" fill="#a8a8a8" text-anchor="middle">
      <text id="x1" x="823.3" y="963.4">Jun 2025</text>
      <text id="x2" x="1039.2" y="963.4">Jun 2025</text>
      <text id="x3" x="1285.3" y="963.4">Jun 2025</text>
      <text id="x4" x="1532.0" y="963.4">Jun 2025</text>
      <text id="x5" x="1747.3" y="963.4">Jul 2025</text>
      <text id="x6" x="1963.0" y="963.4">Jul 2025</text>
    </g>
  </svg>
  </div>
</main>


<!-- ================= TABLE CARD ================= -->
<section class="card" style="top:1064px;height:398px;border-bottom:0;border-bottom-left-radius:0;border-bottom-right-radius:0;overflow:hidden">
  <div class="abs" style="left:-31px;top:-1065px;width:2122px;height:1462px">
  <nav>
    <div class="grp" style="left:69px;top:1103px;width:1232px;height:66px;border-radius:26px"></div>
    <div class="act" style="left:470px;top:1107.5px;width:167.5px;height:58.5px;border-radius:24px"></div>
    <span class="t mut" id="b-ap" style="left:99.0px;top:1126.3px;font-size:22.2px;letter-spacing:0.14px">Asset Positions</span>
    <span class="t mut" id="b-oo" style="left:310.0px;top:1126.3px;font-size:22.2px;letter-spacing:0.00px">Open Orders</span>
    <span class="t grn" id="b-rf" style="left:495.0px;top:1126.3px;font-size:22.2px;letter-spacing:-0.08px">Recent Fills</span>
    <span class="t mut" id="b-ct" style="left:668.0px;top:1126.3px;font-size:22.2px;letter-spacing:0.07px">Completed Trades</span>
    <span class="t mut" id="b-tw" style="left:908.0px;top:1126.3px;font-size:22.2px;letter-spacing:0.33px">TWAP</span>
    <span class="t mut" id="b-dw" style="left:1029.0px;top:1126.3px;font-size:22.2px;letter-spacing:0.33px">Deposits &amp; Withdrawals</span>
  </nav>

  <div class="hr" style="left:75px;top:1298px;width:1965px"></div>
  <div class="hr" style="left:75px;top:1388px;width:1965px"></div>

  <div role="table">
    <div role="row" style="font-size:25.2px;color:#a3a3a3">
      <span class="t" id="h-time" style="left:95.2px;top:1239.2px;letter-spacing:0.26px">Time</span>
      <span class="t" id="h-asset" style="left:354.0px;top:1239.2px;letter-spacing:0.41px">Asset</span>
      <span class="t" id="h-dir" style="left:484.0px;top:1239.2px;letter-spacing:0.63px">Direction</span>
      <span class="t" id="h-size" style="left:694.0px;top:1239.2px;letter-spacing:-0.33px">Size</span>
      <span class="t" id="h-price" style="left:890.0px;top:1239.2px;letter-spacing:0.44px">Price</span>
      <span class="t" id="h-sp" style="left:1082.0px;top:1239.2px;letter-spacing:0.46px">Start Position</span>
      <span class="t" id="h-cp" style="left:1314.0px;top:1239.2px;letter-spacing:0.00px">Closed PnL</span>
      <span class="t" id="h-fee" style="left:1545.0px;top:1239.2px;letter-spacing:0.00px">Fee</span>
      <span class="t" id="h-tx" style="left:1812.8px;top:1239.2px;letter-spacing:0.10px">Transaction</span>
    </div>
    <div role="row" style="font-size:25.2px">
      <span class="t" id="r1-time" style="left:95.6px;top:1329.8px;letter-spacing:-0.05px">Jul 10, 2:09 AM</span>
      <span class="t" id="r1-asset" style="left:353.0px;top:1329.8px;letter-spacing:-1.50px">ETH</span>
      <span class="t" id="r1-dir" style="left:485.0px;top:1329.8px;color:#e57a6e;letter-spacing:0.20px">Close Short</span>
      <span class="t" id="r1-size" style="left:694.0px;top:1329.8px;letter-spacing:1.38px">50,000.00</span>
      <span class="t" id="r1-price" style="left:892.0px;top:1329.8px;letter-spacing:0.24px">$2,739.90</span>
      <span class="t" id="r1-sp" style="left:1083.0px;top:1329.8px;letter-spacing:1.57px">-50000.0</span>
      <span class="t" id="r1-cp" style="left:1315.0px;top:1329.8px;color:#e8705f;letter-spacing:0.37px">$-715,894.69</span>
      <span class="t" id="r1-fee" style="left:1546.0px;top:1329.8px;color:#b5b5b5;letter-spacing:-0.46px">61,647.70 USDC</span>
      <span class="t" id="r1-tx" style="left:1813.4px;top:1329.8px;color:#b5b5b5;letter-spacing:0.33px">0xa0e6...cc5e</span>
    </div>
    <div role="row" style="font-size:25.2px">
      <span class="t" id="r2-time" style="left:95.6px;top:1420.3px;letter-spacing:-0.33px">Jun 25, 1:43 AM</span>
      <span class="t" id="r2-asset" style="left:353.0px;top:1420.3px;letter-spacing:-1.50px">ETH</span>
      <span class="t" id="r2-dir" style="left:485.0px;top:1420.3px;color:#e57a6e;letter-spacing:0.11px">Open Short</span>
      <span class="t" id="r2-size" style="left:694.0px;top:1420.3px;letter-spacing:0.43px">609.5111</span>
      <span class="t" id="r2-price" style="left:892.0px;top:1420.3px;letter-spacing:0.50px">$2,452.00</span>
      <span class="t" id="r2-sp" style="left:1083.0px;top:1420.3px;letter-spacing:1.20px">-49390.4889</span>
      <span class="t" id="r2-cp" style="left:1315.0px;top:1420.3px;color:#5fc094;letter-spacing:1.50px">$0.00</span>
      <span class="t" id="r2-fee" style="left:1546.0px;top:1420.3px;color:#b5b5b5;letter-spacing:0.19px">59.7808 USDC</span>
      <span class="t" id="r2-tx" style="left:1813.4px;top:1420.3px;color:#b5b5b5;letter-spacing:0.26px">0×0891...9a35</span>
    </div>
  </div>

  <!-- annotation highlight -->
  <div class="abs" style="left:74.5px;top:1296.8px;width:1933.3px;height:85.4px;border:6.4px solid #e34a32;border-radius:10.5px"></div>
  </div>
</section>


</div>
</body>
</html>
